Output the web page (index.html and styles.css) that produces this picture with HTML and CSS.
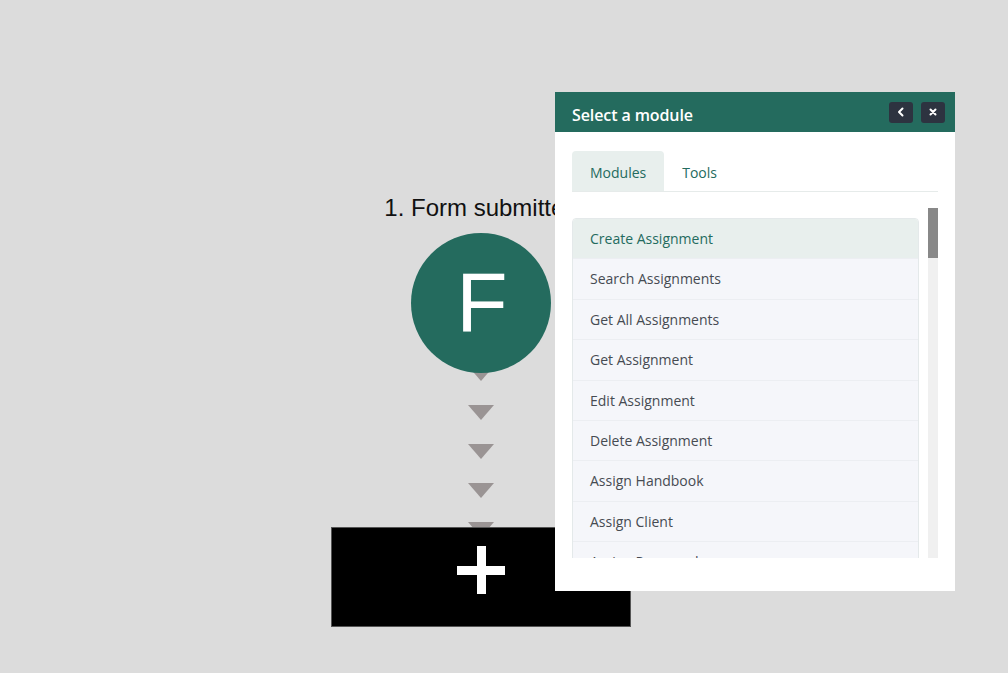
FILE: index.html
```html
<!DOCTYPE html>
<html>
<head>
<meta charset="utf-8">
<link rel="stylesheet" href="styles.css">
</head>
<body>
<div class="stage">
  <div class="flow">
    <div class="step-title">1. Form submitted</div>
    <div class="node"><span>F</span></div>
    <div class="arrows">
      <div class="tri first"></div>
      <div class="tri"></div>
      <div class="tri"></div>
      <div class="tri"></div>
      <div class="tri"></div>
    </div>
    <div class="add-box"><span class="plus"></span></div>
  </div>

  <div class="panel">
    <div class="panel-head">
      <div class="panel-title">Select a module</div>
      <div class="head-btns">
        <button class="hbtn" aria-label="back">
          <svg width="10" height="10" viewBox="0 0 10 10"><path d="M6.5 1.5 L3 5 L6.5 8.5" fill="none" stroke="#fff" stroke-width="2" stroke-linecap="round" stroke-linejoin="round"/></svg>
        </button>
        <button class="hbtn" aria-label="close">
          <svg width="10" height="10" viewBox="0 0 10 10"><path d="M2.5 2.5 L7.5 7.5 M7.5 2.5 L2.5 7.5" fill="none" stroke="#fff" stroke-width="2" stroke-linecap="round"/></svg>
        </button>
      </div>
    </div>
    <div class="panel-body">
      <div class="tabs">
        <div class="tab active">Modules</div>
        <div class="tab">Tools</div>
      </div>
      <div class="scroll-area">
        <div class="viewport">
          <ul class="list">
            <li class="item active">Create Assignment</li>
            <li class="item">Search Assignments</li>
            <li class="item">Get All Assignments</li>
            <li class="item">Get Assignment</li>
            <li class="item">Edit Assignment</li>
            <li class="item">Delete Assignment</li>
            <li class="item">Assign Handbook</li>
            <li class="item">Assign Client</li>
            <li class="item">Assign Password</li>
          </ul>
        </div>
        <div class="scrollbar"><div class="thumb"></div></div>
      </div>
    </div>
  </div>
</div>
</body>
</html>
```

FILE: styles.css
```css
html, body {
  margin: 0;
  padding: 0;
  width: 1008px;
  height: 673px;
  overflow: hidden;
  background: #dcdcdc;
}

.stage {
  position: relative;
  width: 1008px;
  height: 673px;
}

.flow {
  width: 300px;
  margin-left: 331px;
  padding-top: 194px;
  display: flex;
  flex-direction: column;
  align-items: center;
}

.step-title {
  font-family: "Liberation Sans", Arial, sans-serif;
  font-size: 24px;
  line-height: 28px;
  color: #111;
  white-space: nowrap;
}

.node {
  position: relative;
  z-index: 2;
  margin-top: 11px;
  width: 140px;
  height: 140px;
  border-radius: 50%;
  background: #246b5e;
  display: flex;
  align-items: center;
  justify-content: center;
}

.node span {
  font-family: "Liberation Sans", Arial, sans-serif;
  font-size: 84px;
  line-height: 1;
  color: #fff;
  margin-left: 2px;
  margin-top: -2px;
}

.arrows {
  margin-top: -7px;
  display: flex;
  flex-direction: column;
  align-items: center;
  gap: 24px;
}

.tri {
  width: 0;
  height: 0;
  border-left: 13px solid transparent;
  border-right: 13px solid transparent;
  border-top: 15px solid #9a9494;
}

.add-box {
  position: relative;
  z-index: 2;
  margin-top: -10px;
  width: 298px;
  height: 98px;
  border: 1px solid #555;
  background: #000;
  display: flex;
  align-items: center;
  justify-content: center;
}

.plus {
  position: relative;
  width: 48px;
  height: 48px;
  margin-top: -14px;
}

.plus::before,
.plus::after {
  content: "";
  position: absolute;
  background: #fff;
}

.plus::before {
  left: 0;
  top: 20px;
  width: 48px;
  height: 9px;
}

.plus::after {
  left: 20px;
  top: 0;
  width: 9px;
  height: 48px;
}

/* Panel overlay */
.panel {
  position: absolute;
  z-index: 5;
  left: 555px;
  top: 92px;
  width: 400px;
  height: 499px;
  background: #fff;
  font-family: "Open Sans", "Noto Sans", sans-serif;
}

.panel-head {
  height: 40px;
  background: #246b5e;
  display: flex;
  align-items: center;
  justify-content: space-between;
  padding: 0 10px 0 17px;
}

.panel-title {
  color: #fff;
  font-size: 16px;
  font-weight: 600;
  letter-spacing: -0.1px;
  margin-top: 6px;
}

.head-btns {
  display: flex;
  gap: 8px;
}

.hbtn {
  width: 24px;
  height: 21px;
  border: 0;
  padding: 0;
  border-radius: 3px;
  background: #2d3340;
  display: flex;
  align-items: center;
  justify-content: center;
}

.panel-body {
  padding: 19px 17px 0 17px;
}

.tabs {
  display: flex;
  height: 40px;
  border-bottom: 1px solid #e6ebea;
}

.tab {
  padding: 2px 18px 0 18px;
  display: flex;
  align-items: center;
  font-size: 14px;
  color: #246b5e;
  border-radius: 4px 4px 0 0;
}

.tab.active {
  background: #e8efed;
}

.scroll-area {
  margin-top: 16px;
  display: flex;
  gap: 9px;
  height: 350px;
}

.viewport {
  width: 347px;
  height: 340px;
  padding-top: 10px;
  overflow: hidden;
}

.list {
  list-style: none;
  margin: 0;
  padding: 0;
  border: 1px solid #e4e9ea;
  border-radius: 4px;
  overflow: hidden;
}

.item {
  padding: 10px 17px;
  line-height: 19.4px;
  font-size: 14px;
  color: #464b52;
  background: #f5f6fa;
  border-bottom: 1px solid #eceef2;
  white-space: nowrap;
}

.item.active {
  background: #e8efed;
  color: #246b5e;
}

.scrollbar {
  width: 10px;
  height: 350px;
  background: #f0f0f0;
}

.thumb {
  height: 50px;
  background: #888;
}
```
